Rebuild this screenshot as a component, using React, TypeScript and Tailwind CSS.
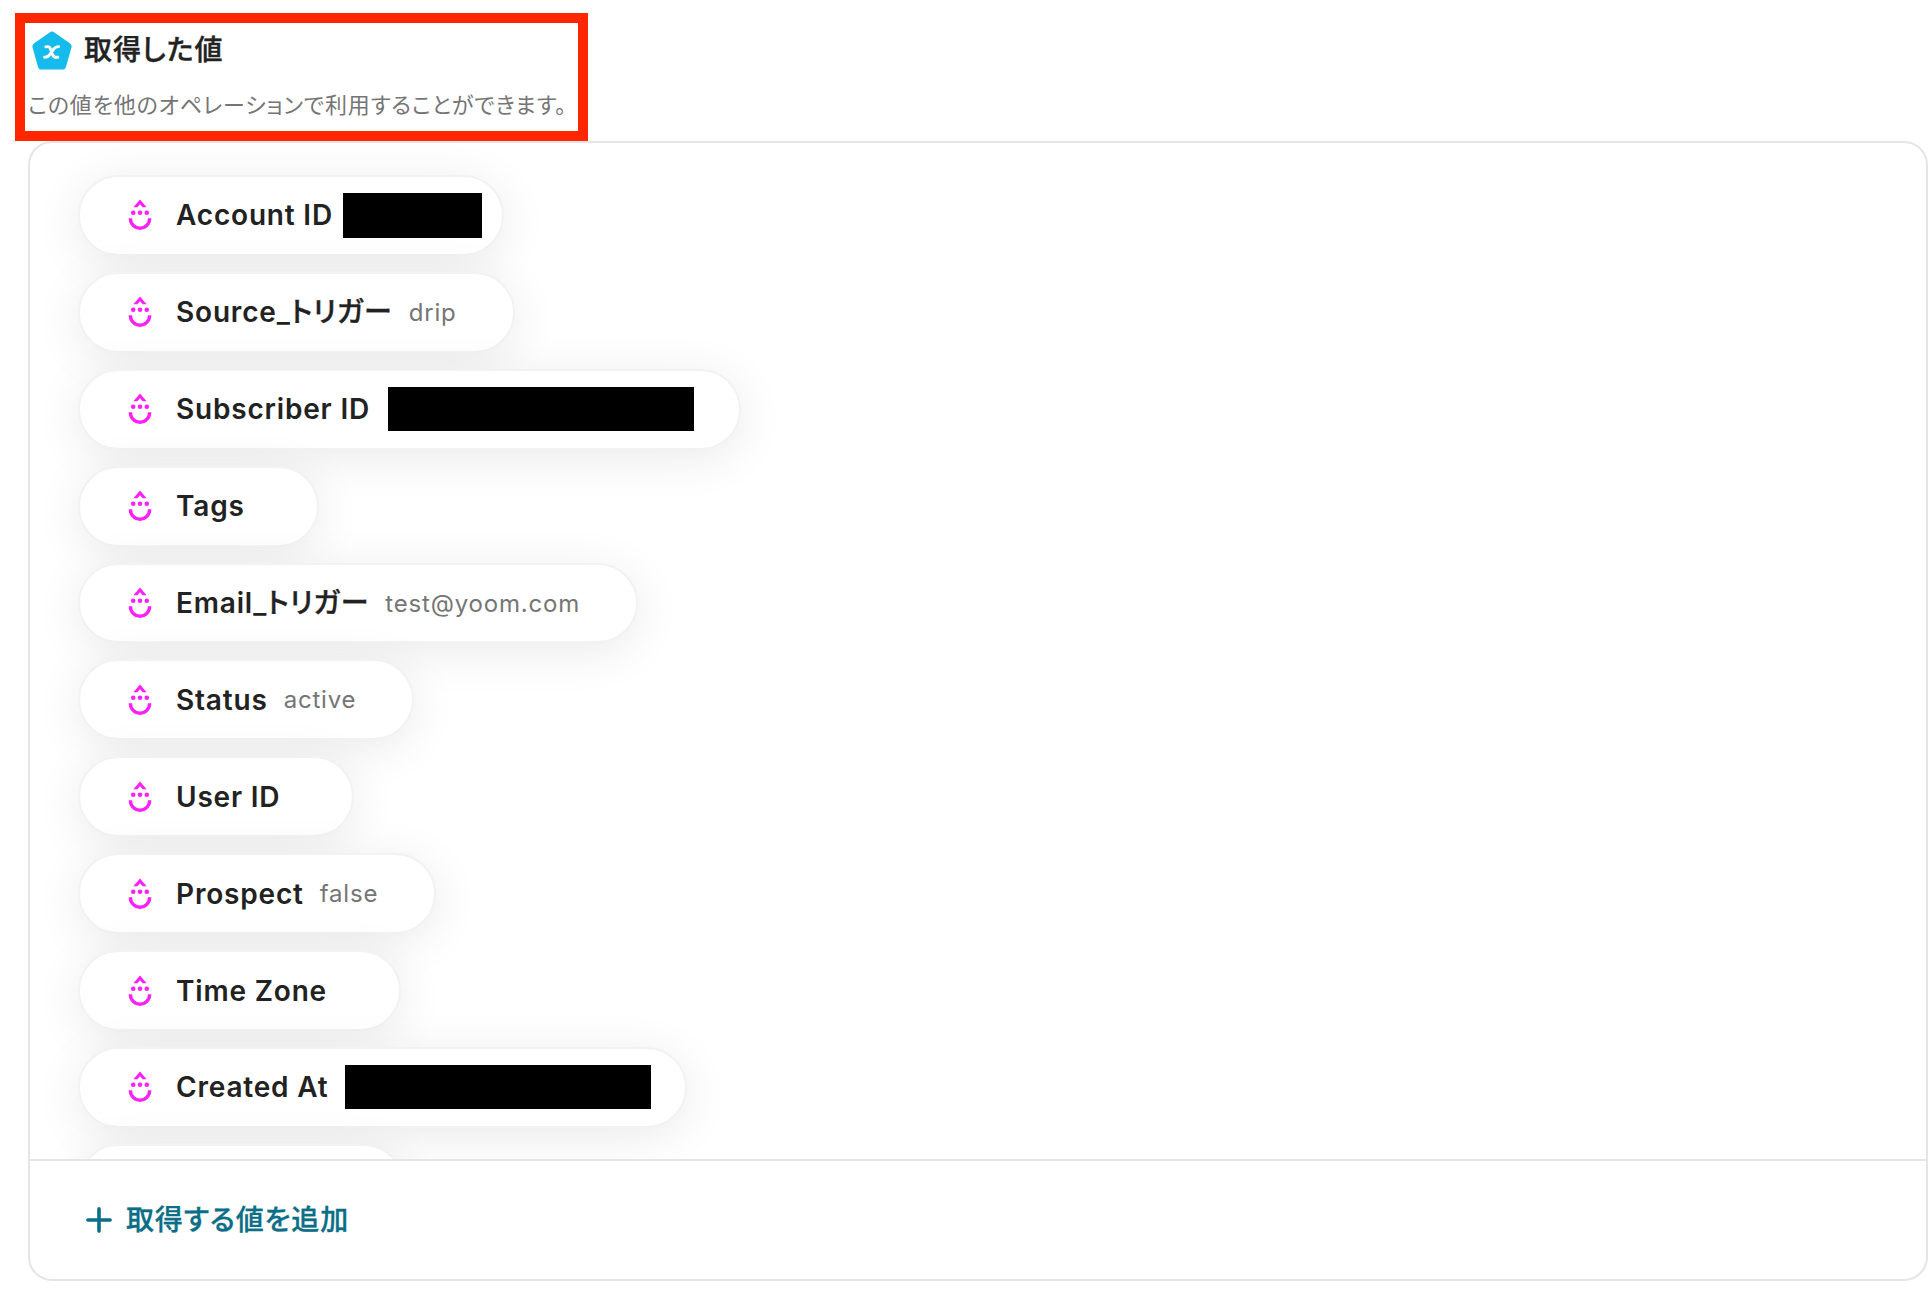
type OutputValue = {
  name: string;
  // japanese suffix, set in a lighter weight than the latin part
  suffix?: string;
  value?: string;
  // width and margin classes for a value that is masked out
  mask?: string;
};

const outputs: OutputValue[] = [
  { name: "Account ID", mask: "ml-[10px] mr-[20px] h-[45px] w-[139px]" },
  { name: "Source_", suffix: "トリガー", value: "drip" },
  { name: "Subscriber ID", mask: "ml-[18px] mr-[45px] h-[44px] w-[306px]" },
  { name: "Tags" },
  { name: "Email_", suffix: "トリガー", value: "test@yoom.com" },
  { name: "Status", value: "active" },
  { name: "User ID" },
  { name: "Prospect", value: "false" },
  { name: "Time Zone" },
  { name: "Created At", mask: "ml-[17px] mr-[34px] h-[44px] w-[306px]" },
];

function DripIcon() {
  return (
    <svg viewBox="0 0 24 32" className="h-8 w-6 shrink-0" fill="none">
      <path d="M5.4 8.2 12 0.6l6.6 7.6h-4L12 5.2 9.4 8.2z" fill="#ff1ffb" />
      <circle cx="5.2" cy="13.7" r="2.3" fill="#ff1ffb" />
      <circle cx="12" cy="13.7" r="2.3" fill="#ff1ffb" />
      <circle cx="18.8" cy="13.7" r="2.3" fill="#ff1ffb" />
      <path d="M2.4 19.2v.4a9.6 9.6 0 0 0 19.2 0v-.4" stroke="#ff1ffb" strokeWidth="3.4" />
    </svg>
  );
}

function VariableIcon() {
  return (
    <svg viewBox="0 0 40 40" className="size-10 shrink-0" fill="none">
      <path
        d="M17.6 1.4a4 4 0 0 1 4.8 0l15.4 10.9a4 4 0 0 1 1.6 4.5L34 35.7a4 4 0 0 1-3.8 2.9H9.8A4 4 0 0 1 6 35.7L.6 16.8a4 4 0 0 1 1.6-4.5z"
        fill="#15bbeb"
      />
      <path
        d="M13.8 15.8c2.6-.5 4 .2 4.7 2.2l2 5.4c.8 2.2 2.6 3.3 5.4 2.8M26.6 15.6c-2.4.1-3.9 1-5.1 2.8l-3.8 5.2c-1.2 1.7-2.7 2.6-5.1 2.6"
        stroke="#fff"
        strokeWidth="2.9"
        strokeLinecap="round"
      />
    </svg>
  );
}

function PlusIcon() {
  return (
    <svg viewBox="0 0 26 26" className="size-[26px] shrink-0" fill="none">
      <path d="M13 1.9v22.2M1.9 13h22.2" stroke="#0b6e87" strokeWidth="3.6" strokeLinecap="round" />
    </svg>
  );
}

function OutputPill({ name, suffix, value, mask }: OutputValue) {
  return (
    <li className="flex h-[80.9px] w-fit shrink-0 items-center rounded-full border-2 border-[#f2f2f2] bg-white pl-12 whitespace-nowrap shadow-[0_8px_48px_rgba(0,0,0,0.085)]">
      <DripIcon />
      <span className="ml-6 text-[28px] leading-none font-semibold text-[#222]">
        {name}
        {suffix && <span className="font-medium [-webkit-text-stroke:0.4px]">{suffix}</span>}
      </span>
      {mask ? (
        <span className={`bg-black ${mask}`} />
      ) : (
        <span className="mt-px mr-14 ml-4 text-2xl leading-none text-[#757575]">{value}</span>
      )}
    </li>
  );
}

export default function App() {
  return (
    <main className="flex h-[1304px] w-[1928px] flex-col overflow-hidden bg-white pt-[13px] font-['Inter','Noto_Sans_CJK_JP',sans-serif] tracking-[0.051em] [font-feature-settings:'palt']">
      <header className="ml-[15px] h-32 w-[573px] shrink-0 border-10 border-[#ff2600] pt-2 pl-[3px] whitespace-nowrap">
        <div className="flex items-center gap-3 pl-1">
          <VariableIcon />
          <h2 className="-mt-0.5 text-[28px] leading-9 font-medium tracking-[0.036em] text-[#222] [-webkit-text-stroke:0.4px]">
            取得した値
          </h2>
        </div>
        <p className="mt-[18px] text-[22px] leading-8 text-[#757575]">
          この値を他のオペレーションで利用することができます。
        </p>
      </header>

      <section className="ml-7 flex h-[1140px] w-[1900px] shrink-0 flex-col overflow-hidden rounded-3xl border-2 border-[#e5e5e5]">
        <ul className="flex h-[1016px] shrink-0 flex-col gap-4 overflow-hidden pt-8 pl-12">
          {outputs.map((output) => (
            <OutputPill key={output.name} {...output} />
          ))}
          <li className="h-[80.9px] w-[326px] shrink-0 rounded-full border-2 border-[#f2f2f2] bg-white shadow-[0_8px_48px_rgba(0,0,0,0.085)]" />
        </ul>
        <div className="flex flex-1 items-center border-t-2 border-[#e5e5e5] pl-14">
          <button className="flex items-center gap-[14px] text-[28px] leading-9 font-medium tracking-[0.03em] text-[#0b6e87] [-webkit-text-stroke:0.3px]">
            <PlusIcon />
            取得する値を追加
          </button>
        </div>
      </section>
    </main>
  );
}
